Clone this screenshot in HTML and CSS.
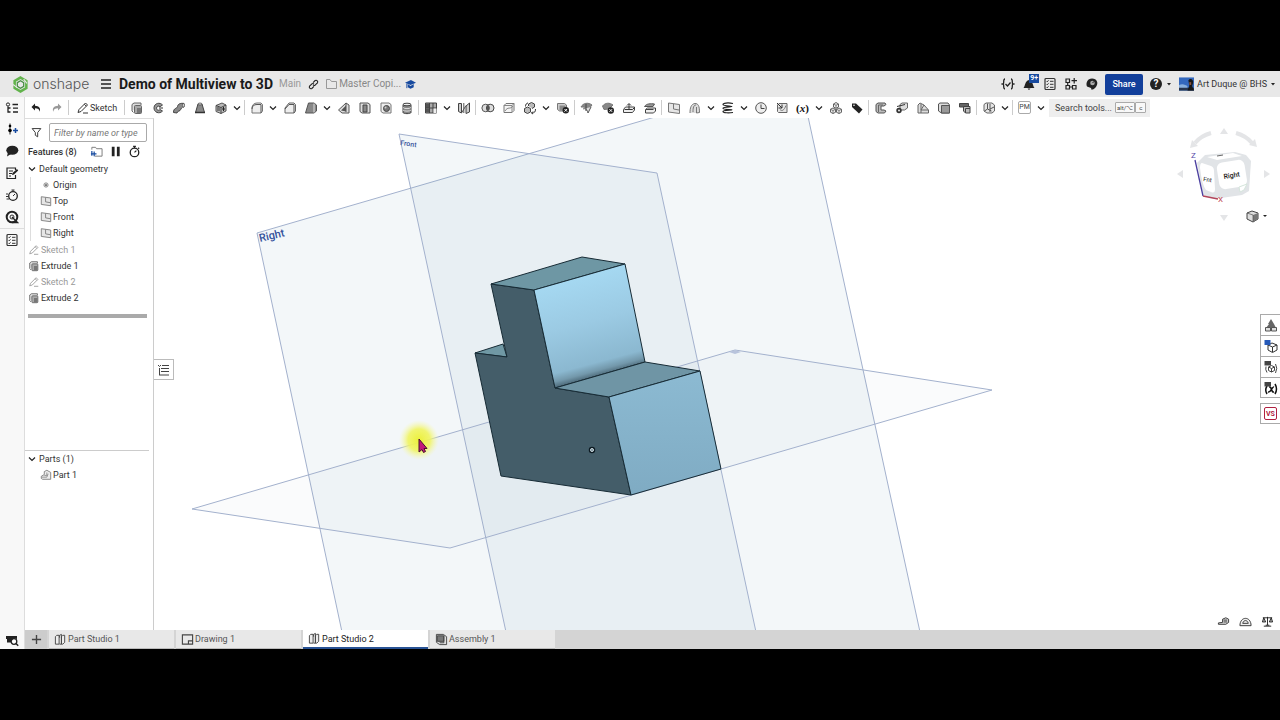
FILE: index.html
```html
<!DOCTYPE html>
<html lang="en">
<head>
<meta charset="utf-8">
<meta name="viewport" content="width=device-width, initial-scale=1">
<title>Demo of Multiview to 3D</title>
<link rel="stylesheet" href="styles.css">
</head>
<body>
<svg class="sprite" aria-hidden="true">
  <defs>
    <symbol id="i-chev" viewBox="0 0 8 8"><path d="M1 2.500 4 5.500 7 2.500" fill="none" stroke="#222" stroke-width="1.200"/></symbol>
    <symbol id="i-caret" viewBox="0 0 6 6"><path d="M1 2h4L3 4.500z" fill="#222"/></symbol>
    <symbol id="i-undo" viewBox="0 0 14 14"><path d="M6 2.500 2.500 6 6 9.500V7.300c3 0 4.200.7 4.700 3.400C12 7 10 4.800 6 4.700z" fill="#222"/></symbol>
    <symbol id="i-redo" viewBox="0 0 14 14"><path d="M8 2.500 11.500 6 8 9.500V7.300c-3 0-4.200.7-4.700 3.400C2 7 4 4.800 8 4.700z" fill="#999"/></symbol>
    <symbol id="i-pencil" viewBox="0 0 14 14"><path d="M2 11.500 3 8.500 9.500 2 11.500 4 5 10.500zM8.300 3.200l2 2M7 12h5" fill="none" stroke="currentColor"/></symbol>
    <symbol id="i-extrude" viewBox="0 0 14 14"><path d="M2 10V3.500L4 2h7v2M2 10l1.500 1.500" fill="#ddd" stroke="#666"/><rect x="4.500" y="4.500" width="7" height="8" rx="1" fill="#aaa" stroke="#666"/><path d="M7 7h4v5H7z" fill="#777"/></symbol>
    <symbol id="i-revolve" viewBox="0 0 14 14"><path d="M11.500 4C9 1 3.500 2 3 6.500c-.3 5 5.500 7 8.500 3.500L9 8.500c-1.500 1.500-3.500.5-3.400-1.500C5.700 5 7.700 4.500 9 5.700z" fill="#999" stroke="#444"/><path d="M8 7h4" stroke="#333"/></symbol>
    <symbol id="i-sweep" viewBox="0 0 14 14"><path d="M1.500 11.500C1.500 6.500 5 8 5.500 5.500 6 2.500 9 2 12 2.500V6C9 5.800 9.500 8 8 9.500 6.500 10.500 5.500 10 5 12z" fill="#8b8b8b" stroke="#444"/><ellipse cx="11.500" cy="4.200" rx="1" ry="1.800" fill="#ddd" stroke="#444" stroke-width=".6"/></symbol>
    <symbol id="i-loft" viewBox="0 0 14 14"><path d="M5 3h4l2.500 8.500h-9z" fill="#888" stroke="#444"/><ellipse cx="7" cy="3" rx="2" ry="1" fill="#ddd" stroke="#444" stroke-width=".7"/><path d="M2 11.500h10" stroke="#333" stroke-width="1.500"/></symbol>
    <symbol id="i-thicken" viewBox="0 0 14 14"><path d="M2 4.500 8 2l4 2v6l-5 2.500-5-2z" fill="#bbb" stroke="#555"/><path d="M2 4.500 7 6.500 12 4M7 6.500v6" fill="none" stroke="#444"/><path d="M3 6h3v4H3z" fill="#777"/><path d="M9.500 6v4M8 8h3" stroke="#222"/></symbol>
    <symbol id="i-fillet" viewBox="0 0 14 14"><path d="M2 12V7c0-3 2-5 5-5h4l1.500 1.500V10L11 12z" fill="#eee" stroke="#777"/><path d="M2 8c0-3 2-4.500 5-4.500h4V12" fill="none" stroke="#555"/></symbol>
    <symbol id="i-chamfer" viewBox="0 0 14 14"><path d="M2 12V7l4-5h5l1.500 1.500V10L11 12z" fill="#eee" stroke="#666"/><path d="M2 8l4-4.500h5V12" fill="none" stroke="#555"/></symbol>
    <symbol id="i-draft" viewBox="0 0 14 14"><path d="M1.500 12 4.500 2h5.500l2.500 2v6L10 12z" fill="#888" stroke="#555"/><path d="M10 2.500v9" stroke="#ddd"/></symbol>
    <symbol id="i-rib" viewBox="0 0 14 14"><path d="M1.500 9 9 2l3 2v8H5z" fill="#ddd" stroke="#555"/><path d="M4 9.500 9 4.500v6z" fill="#555"/><path d="M9 2v9" stroke="#555"/></symbol>
    <symbol id="i-shell" viewBox="0 0 14 14"><path d="M2 2h8l2 1.500V12H4L2 10.500z" fill="#ddd" stroke="#555"/><path d="M5 4h4v7H5z" fill="#888" stroke="#444"/></symbol>
    <symbol id="i-hole" viewBox="0 0 14 14"><path d="M2 2h8l2 1.500V12H4L2 10.500z" fill="#eee" stroke="#777"/><circle cx="7.500" cy="7.500" r="3" fill="#777" stroke="#444"/><circle cx="6.500" cy="6.500" r="1" fill="#ccc"/></symbol>
    <symbol id="i-thread" viewBox="0 0 14 14"><path d="M3 3.500v8c0 1.500 8 1.500 8 0v-8" fill="#888" stroke="#444"/><ellipse cx="7" cy="3.500" rx="4" ry="1.300" fill="#eee" stroke="#444"/><path d="M3 6.500c1 1.500 7 1.500 8 0M3 9c1 1.500 7 1.500 8 0" fill="none" stroke="#ddd"/></symbol>
    <symbol id="i-pattern" viewBox="0 0 14 14"><path d="M1.500 2h11v10h-11z" fill="#aaa" stroke="#444"/><path d="M2 2.500h3.500V7H2zM2 7.500h3.500v4H2z" fill="#555"/><path d="M5.500 2v10M9 2v10M2 7h10.500" stroke="#444"/><path d="M9.500 7.500h3V12h-3z" fill="#eee"/></symbol>
    <symbol id="i-mirror" viewBox="0 0 14 14"><path d="M1.500 2.500h3V12l-3-1.500zM9 5l3.500-3v9L9 12.500z" fill="#ccc" stroke="#444"/><path d="M4.500 12 9 4.500M6.800 2v10" stroke="#555"/></symbol>
    <symbol id="i-boolean" viewBox="0 0 14 14"><circle cx="4.700" cy="7" r="3.800" fill="#ddd" stroke="#555"/><circle cx="9.200" cy="7" r="3.800" fill="#bbb" fill-opacity=".5" stroke="#444"/><path d="M7 3.900a3.800 3.800 0 0 1 0 6.200 3.800 3.800 0 0 1 0-6.200" fill="#555"/></symbol>
    <symbol id="i-split" viewBox="0 0 14 14"><path d="M2 4.500 4 2.500h8v7l-2 2H2z" fill="#f5f5f5" stroke="#777"/><path d="M2 4.500h8v7M10 4.500l2-2M3 10c3-5 5-1 8-5" fill="none" stroke="#888"/></symbol>
    <symbol id="i-transform" viewBox="0 0 14 14"><path d="M1.500 7.500V11l3 1.500 3-1.500V7.500L4.500 6zM5.500 5V3l3-1.500 3 1.500V6l-2.500 1.500" fill="#bbb" stroke="#444"/><path d="M2.500 5.500c0-2 1-3.500 2.500-3.500M12.500 8c0 3-1 4-4 4M10 10.500 8.500 12l1.500 1" fill="none" stroke="#333"/></symbol>
    <symbol id="i-delete" viewBox="0 0 14 14"><path d="M1.500 2.500h7l2 1.500v6H3.500l-2-1.500z" fill="#ccc" stroke="#777"/><path d="M3.500 4.500h6v5h-6z" fill="#888"/><circle cx="9.800" cy="9.300" r="3.200" fill="#222"/><path d="m8.500 8 2.600 2.600m0-2.600-2.600 2.600" stroke="#fff"/></symbol>
    <symbol id="i-face1" viewBox="0 0 14 14"><path d="M1 6c2-4 7-5 11-2L8 9C6 6 4 6 1 6z" fill="#888" stroke="#777"/><path d="M3 8c2-1 4 0 5 4l3-6" fill="#ddd" stroke="#555"/><path d="M6 3v7" stroke="#444"/></symbol>
    <symbol id="i-face2" viewBox="0 0 14 14"><path d="M1.500 5c3-3.500 7-3.500 10.500-1L8 8 3 8.500z" fill="#888" stroke="#777"/><circle cx="9.800" cy="9.500" r="3.200" fill="#222"/><path d="m8.500 8.200 2.600 2.600m0-2.600-2.600 2.600" stroke="#fff"/></symbol>
    <symbol id="i-face3" viewBox="0 0 14 14"><path d="M1.500 8.500 3.500 6h9v3l-2 2.500h-9z" fill="#eee" stroke="#444"/><path d="M2.500 8.500h8l2-2M7 8V3M5 4.500 7 2.500 9 4.500" fill="none" stroke="#333"/></symbol>
    <symbol id="i-face4" viewBox="0 0 14 14"><path d="M2.500 8.500 4.500 7h8v3l-2 2h-8z" fill="#eee" stroke="#444"/><path d="M1.500 5.500c2-3 6-3 10-2.500L10 5.500z" fill="#999" stroke="#555"/><path d="M3 8.500h7.500" stroke="#444"/></symbol>
    <symbol id="i-plane" viewBox="0 0 14 14"><path d="M1.500 2 12.500 3.500v9L1.500 11z" fill="#e6e6e6" stroke="#777"/><path d="M6.500 3V8L12 9" fill="none" stroke="#777"/></symbol>
    <symbol id="i-surface" viewBox="0 0 14 14"><path d="M2 12c0-5 1-9 5-9.500 3 0 4.500 2 4.500 9L8.500 12" fill="#ddd" stroke="#777"/><path d="M5 11c0-4 .5-7 3-7M8.500 12V6" fill="none" stroke="#777"/></symbol>
    <symbol id="i-helix" viewBox="0 0 14 14"><path d="M12 2.500C7 1.500 2 2 2 3.500S11 5 11 5.500 2 5.500 2 7.200s9 1 9 1.600S2 9 2 10.500 8 12 12 11.500" fill="none" stroke="#222" stroke-width="1.200"/></symbol>
    <symbol id="i-clock" viewBox="0 0 14 14"><circle cx="7" cy="7" r="5.300" fill="#eee" stroke="#555"/><path d="M7 3.500V7.500h3.500" fill="none" stroke="#444"/></symbol>
    <symbol id="i-derived" viewBox="0 0 14 14"><path d="M2.500 4 4 2.500h8v9H3.500l-1-1z" fill="#e4e4e4" stroke="#666"/><path d="m2 2 5 5M7 3.500V7H3.500" fill="none" stroke="#333"/><path d="M5 8.500c2 2 4 1 6-4" fill="none" stroke="#777"/></symbol>
    <symbol id="i-mate" viewBox="0 0 14 14"><path d="M7 1.500 9.500 3v3L7 7.300 4.500 6V3zM4 7l2.500 1.300v3L4 12.500 1.500 11.200v-3zM10 7l2.500 1.300v3L10 12.500l-2.500-1.200v-3z" fill="#eee" stroke="#555" stroke-width=".9"/><path d="M4.500 3 7 4.300 9.500 3M7 4.300v3M1.500 8.300 4 9.500l2.500-1.200M4 9.500v3M7.500 8.300 10 9.500l2.500-1.200M10 9.500v3" fill="none" stroke="#555" stroke-width=".7"/></symbol>
    <symbol id="i-tag" viewBox="0 0 14 14"><path d="M2 2.500h4l6.500 6L9 12.500 2 6z" fill="#222"/><circle cx="4" cy="4.200" r=".8" fill="#fff"/></symbol>
    <symbol id="i-sm1" viewBox="0 0 14 14"><path d="M2 3.500 4 2h7l1 1.500L10 5H7v4h3l2 1-1.500 2H4l-2-1.500z" fill="#bbb" stroke="#555"/><path d="M4.500 11V4H9" fill="none" stroke="#666"/></symbol>
    <symbol id="i-sm2" viewBox="0 0 14 14"><path d="M5 3.500 7 2h5.500v5l-3 2H5z" fill="#ddd" stroke="#666"/><circle cx="4" cy="9.500" r="2.700" fill="#333"/><circle cx="4" cy="9.500" r="1" fill="#eee"/><path d="M2 5.500 10 3.500" stroke="#333"/></symbol>
    <symbol id="i-sm3" viewBox="0 0 14 14"><path d="M2 4 4 2l4 2 4.500 5v3H2z" fill="#ddd" stroke="#666"/><path d="M5 3v6h7M5 9 8 4M5 9v3" fill="none" stroke="#666"/></symbol>
    <symbol id="i-sm4" viewBox="0 0 14 14"><path d="M1.500 3 3 2h8l1.500 2v8H4.500L1.500 10z" fill="#ddd" stroke="#555"/><path d="M4.500 4.500h8V12h-8z" fill="#999" stroke="#555"/></symbol>
    <symbol id="i-sm5" viewBox="0 0 14 14"><path d="M1.500 2.500h9V6h-9z" fill="#666" stroke="#444"/><path d="M5.500 5.500H12v6.500H7.500l-2-2z" fill="#bbb" stroke="#444"/><path d="M7.500 7.500H12M7.500 7.500V12" stroke="#444"/></symbol>
    <symbol id="i-frame" viewBox="0 0 14 14"><path d="M2 3.500 4 2h6l2.500 2v6L10 12H5L2 10z" fill="#e6e6e6" stroke="#666"/><path d="M5.500 2.500V8l4 2M5.500 8 2.500 10M8 3v5l4-2M8 8v3" fill="none" stroke="#555"/></symbol>
    <symbol id="i-tree" viewBox="0 0 14 14"><circle cx="3" cy="3.500" r="1.600" fill="none" stroke="#222"/><path d="M3 5.500V11h2.500M3 7h2.500M7.500 3.500H13M8 7.200h5M8 11h5" fill="none" stroke="#222" stroke-width="1.300"/></symbol>
    <symbol id="i-insert" viewBox="0 0 14 14"><path d="M5 1.500v11" stroke="#222"/><circle cx="5" cy="4" r="1.300"/><circle cx="5" cy="8.500" r="1.800"/><path d="M8 8.500h5M10.500 6v5" stroke="#174a9f" stroke-width="1.500"/></symbol>
    <symbol id="i-chat" viewBox="0 0 14 14"><ellipse cx="7.300" cy="6.300" rx="6" ry="4.500" fill="#222"/><path d="m3 8-1 4.500 4-2.500" fill="#222"/></symbol>
    <symbol id="i-note" viewBox="0 0 14 14"><path d="M10.500 4V2H2v10.500h8.500V9M4 5h4M4 7.500h3M4 10h2" fill="none" stroke="#222" stroke-width="1.200"/><path d="m7 9 .5-2L12 3l1.200 1.500L9 8.500z" fill="#222"/></symbol>
    <symbol id="i-timer" viewBox="0 0 14 14"><circle cx="7" cy="8" r="4.600" fill="none" stroke="#222" stroke-width="1.400"/><path d="M5.500 1.500h3M7 1.500v2M7 8l2-2M11 3l1 1" stroke="#222" stroke-width="1.300"/></symbol>
    <symbol id="i-history" viewBox="0 0 14 14"><circle cx="8" cy="8" r="4.300" fill="none" stroke="#222" stroke-width="1.300"/><path d="M6.500 2h3M8 2v2M8 8l2-2M1 6h2M1 8.500h3M1.500 11h2.500" stroke="#333"/></symbol>
    <symbol id="i-gauge" viewBox="0 0 14 14"><circle cx="7" cy="7" r="5.300" fill="none" stroke="#222" stroke-width="2"/><circle cx="7" cy="7" r="2" fill="none" stroke="#333"/><path d="m7 7 5.500 5.500H7" stroke="#222" fill="none" stroke-width="1.400"/></symbol>
    <symbol id="i-list" viewBox="0 0 14 14"><rect x="2" y="1.500" width="10" height="11" rx="1" fill="none" stroke="#333" stroke-width="1.200"/><path d="m3.500 4 .8.8 1.200-1.500M3.500 7l.8.8 1.200-1.500M3.500 10l.8.8 1.200-1.500M7 4.300h3.500M7 7.300h3.500M7 10.300h3.500" fill="none" stroke="#333"/></symbol>
    <symbol id="i-tabsearch" viewBox="0 0 14 14"><path d="M1 3h11v3a4 4 0 0 0-6 3.500H2V6H1z" fill="#222"/><circle cx="9" cy="8.500" r="2.800" fill="#fff" stroke="#222" stroke-width="1.300"/><path d="m11 10.500 2.200 2.200" stroke="#222" stroke-width="1.500"/></symbol>
    <symbol id="i-studio" viewBox="0 0 14 14"><path d="M1.500 4 3 2.500h2.500V12h-4zM6 5V2.500L8 1.500V12H6M8 4l1.500-1.500h2V10L9.500 12H8z" fill="#eee" stroke="#444"/></symbol>
    <symbol id="i-drawing" viewBox="0 0 14 14"><path d="M1.500 2h11v10h-11zM8 12V8.500h4.500" fill="none" stroke="#444" stroke-width="1.200"/></symbol>
    <symbol id="i-assembly" viewBox="0 0 14 14"><path d="M1.500 1.500H9L12.500 4v8.500H5L1.500 10z" fill="#ddd" stroke="#444"/><path d="M2.500 3h7v6h-7z" fill="#777" stroke="#444"/><path d="M9.500 3v7.500H5" fill="none" stroke="#444"/></symbol>
    <symbol id="i-part" viewBox="0 0 14 14"><path d="M1.500 8.500 5 6.500V3l3-1.500L12.500 4v8H3l-1.500-1z" fill="#eee" stroke="#777"/><path d="M5 7.500h3V4M2 9.500h6l1.500-4" fill="none" stroke="#888"/></symbol>
  </defs>
</svg>

<div class="app">
  <header class="header">
    <svg class="logo" viewBox="0 0 16 16" aria-hidden="true"><path d="M8 1.500 13.500 4.700v6.600L8 14.500 2.500 11.300V4.700z" fill="none" stroke="#62b34c" stroke-width="2.400"/><path d="M8 4.500 11 6.200v3.600L8 11.500 5 9.800V6.200z" fill="#e8e8e8" stroke="#4a8f45" stroke-width="1.200"/><path d="m1 8 4 3M11 3l3 4" stroke="#e8e8e8"/></svg>
    <span class="brand">onshape</span>
    <button class="plain menu" aria-label="Menu"><svg viewBox="0 0 12 12"><path d="M1 2h10M1 6h10M1 10h10" stroke="#222" stroke-width="1.700"/></svg></button>
    <h1 class="title">Demo of Multiview to 3D</h1>
    <span class="branch">Main</span>
    <button class="plain link" aria-label="Copy link"><svg viewBox="0 0 12 12"><path d="M5.500 4 7.800 1.700c1.800-1 3.500.8 2.500 2.500L8 6.500c-1 .8-2 .5-2.500 0M6.500 8 4.200 10.300c-1.800 1-3.500-.8-2.500-2.500L4 5.500c1-.8 2-.5 2.500 0" fill="none" stroke="#222" stroke-width="1.200"/></svg></button>
    <a class="folder" href="#"><svg viewBox="0 0 12 12"><path d="M1 10.500v-9h3.500l1.500 2h5v7z" fill="none" stroke="#999"/></svg>Master Copi...</a>
    <svg class="edu" viewBox="0 0 12 12" aria-hidden="true"><path d="M0 4 6.500 1 12 4 6 6.500z" fill="#174a9f"/><path d="M3 5.500v3.500l3 1.500 3.500-1.500v-3.500L6 7.500z" fill="#174a9f"/><path d="M2 5v5" stroke="#174a9f"/></svg>
    <nav class="account">
      <button class="plain hi" aria-label="Feature script"><svg viewBox="0 0 14 14"><path d="M4 2C2 2 3 5.500 2.500 6.500L1 7l1.500.5C3 8.500 2 12 4 12M10 2c2 0 1 3.500 1.500 4.500L13 7l-1.500.5C11 8.500 12 12 10 12M4.500 7l2 2 3-3.500" fill="none" stroke="#222" stroke-width="1.300"/></svg></button>
      <button class="plain hi bell" aria-label="Notifications"><svg viewBox="0 0 14 14"><path d="M1.500 11c2-2 1-7 5.500-8 4.500 1 3.500 6 5.500 8zM5.500 11.500h3L7 13z" fill="#222"/></svg><span class="badge">9+</span></button>
      <button class="plain hi" aria-label="Tasks"><svg viewBox="0 0 14 14"><use href="#i-list"/></svg></button>
      <button class="plain hi" aria-label="Apps"><svg viewBox="0 0 14 14"><path d="M2 2h3.500v3.500H2zM2 8.500h3.500V12H2zM8.500 8.500H12V12H8.500zM10.200 1v5.500M7.500 3.700H13M5.500 10h3M3.700 5.500v3" fill="none" stroke="#222" stroke-width="1.200"/></svg></button>
      <button class="plain hi" aria-label="Learning"><svg viewBox="0 0 14 14"><path d="M7 1.500c5 0 6.500 4.500 4.500 7.500-1 1.500-2 3.500-5 3.700L6 11 2 9.500C.5 6 2.500 1.500 7 1.500z" fill="#222"/><circle cx="7.500" cy="6" r="2.300" fill="#aaa"/><path d="m7.500 6 2-2" stroke="#222"/></svg></button>
      <button class="share">Share</button>
      <button class="plain help" aria-label="Help"><span class="q">?</span><svg class="caret" viewBox="0 0 6 6"><use href="#i-caret"/></svg></button>
      <button class="plain user"><svg class="avatar" viewBox="0 0 16 14" aria-hidden="true"><path d="M0 0h16v14H0z" fill="#3468bd"/><path d="M0 8c4-2 7 0 9 1v5H0z" fill="#8ab0dd"/><path d="M0 11h16v3H0z" fill="#27354d"/><path d="M10 3c2-3 6-1 5 3l-1 3 2 5H9l2-5z" fill="#171717"/><path d="M11 5h2v3h-2z" fill="#8a533d"/></svg>Art Duque @ BHS<svg class="caret" viewBox="0 0 6 6"><use href="#i-caret"/></svg></button>
    </nav>
  </header>

  <div class="body">
    <nav class="rail" aria-label="Panels">
      <button class="plain first" aria-label="Feature list"><svg><use href="#i-tree"/></svg></button>
      <button class="plain" aria-label="Insert"><svg><use href="#i-insert"/></svg></button>
      <button class="plain" aria-label="Comments"><svg><use href="#i-chat"/></svg></button>
      <button class="plain" aria-label="Notes"><svg><use href="#i-note"/></svg></button>
      <button class="plain" aria-label="History"><svg><use href="#i-history"/></svg></button>
      <button class="plain" aria-label="Simulation"><svg><use href="#i-gauge"/></svg></button>
      <button class="plain ruled" aria-label="Checklist"><svg><use href="#i-list"/></svg></button>
      <button class="plain last" aria-label="Search tabs"><svg><use href="#i-tabsearch"/></svg></button>
    </nav>

    <div class="document">
      <div class="toolbar" role="toolbar" aria-label="Tools">
        <button class="tool" aria-label="Undo"><svg><use href="#i-undo"/></svg></button>
        <button class="tool" aria-label="Redo"><svg><use href="#i-redo"/></svg></button>
        <i class="sep"></i>
        <button class="sketch"><svg><use href="#i-pencil"/></svg>Sketch</button>
        <i class="sep"></i>
        <button class="tool" aria-label="Extrude"><svg><use href="#i-extrude"/></svg></button>
        <button class="tool" aria-label="Revolve"><svg><use href="#i-revolve"/></svg></button>
        <button class="tool" aria-label="Sweep"><svg><use href="#i-sweep"/></svg></button>
        <button class="tool" aria-label="Loft"><svg><use href="#i-loft"/></svg></button>
        <button class="tool" aria-label="Thicken"><svg><use href="#i-thicken"/></svg></button>
        <button class="more" aria-label="More solids"><svg><use href="#i-chev"/></svg></button>
        <i class="sep"></i>
        <button class="tool" aria-label="Fillet"><svg><use href="#i-fillet"/></svg></button>
        <button class="more" aria-label="More fillets"><svg><use href="#i-chev"/></svg></button>
        <button class="tool" aria-label="Chamfer"><svg><use href="#i-chamfer"/></svg></button>
        <button class="tool" aria-label="Draft"><svg><use href="#i-draft"/></svg></button>
        <button class="more" aria-label="More drafts"><svg><use href="#i-chev"/></svg></button>
        <button class="tool" aria-label="Rib"><svg><use href="#i-rib"/></svg></button>
        <button class="tool" aria-label="Shell"><svg><use href="#i-shell"/></svg></button>
        <button class="tool" aria-label="Hole"><svg><use href="#i-hole"/></svg></button>
        <button class="tool" aria-label="Thread"><svg><use href="#i-thread"/></svg></button>
        <i class="sep"></i>
        <button class="tool" aria-label="Pattern"><svg><use href="#i-pattern"/></svg></button>
        <button class="more" aria-label="More patterns"><svg><use href="#i-chev"/></svg></button>
        <button class="tool" aria-label="Mirror"><svg><use href="#i-mirror"/></svg></button>
        <i class="sep"></i>
        <button class="tool" aria-label="Boolean"><svg><use href="#i-boolean"/></svg></button>
        <button class="tool" aria-label="Split"><svg><use href="#i-split"/></svg></button>
        <button class="tool" aria-label="Transform"><svg><use href="#i-transform"/></svg></button>
        <button class="more" aria-label="More transforms"><svg><use href="#i-chev"/></svg></button>
        <button class="tool" aria-label="Delete part"><svg><use href="#i-delete"/></svg></button>
        <i class="sep"></i>
        <button class="tool" aria-label="Modify fillet"><svg><use href="#i-face1"/></svg></button>
        <button class="tool" aria-label="Delete face"><svg><use href="#i-face2"/></svg></button>
        <button class="tool" aria-label="Move face"><svg><use href="#i-face3"/></svg></button>
        <button class="tool" aria-label="Replace face"><svg><use href="#i-face4"/></svg></button>
        <i class="sep"></i>
        <button class="tool" aria-label="Plane"><svg><use href="#i-plane"/></svg></button>
        <button class="tool" aria-label="Surface"><svg><use href="#i-surface"/></svg></button>
        <button class="more" aria-label="More surfaces"><svg><use href="#i-chev"/></svg></button>
        <button class="tool" aria-label="Helix"><svg><use href="#i-helix"/></svg></button>
        <button class="more" aria-label="More curves"><svg><use href="#i-chev"/></svg></button>
        <button class="tool" aria-label="Composite"><svg><use href="#i-clock"/></svg></button>
        <button class="tool" aria-label="Derived"><svg><use href="#i-derived"/></svg></button>
        <button class="tool var" aria-label="Variable">(<em>x</em>)</button>
        <button class="more" aria-label="More variables"><svg><use href="#i-chev"/></svg></button>
        <button class="tool" aria-label="Mate connector"><svg><use href="#i-mate"/></svg></button>
        <button class="tool" aria-label="Tag"><svg><use href="#i-tag"/></svg></button>
        <i class="sep"></i>
        <button class="tool" aria-label="Sheet metal"><svg><use href="#i-sm1"/></svg></button>
        <button class="tool" aria-label="Flange"><svg><use href="#i-sm2"/></svg></button>
        <button class="tool" aria-label="Corner"><svg><use href="#i-sm3"/></svg></button>
        <button class="tool" aria-label="Bend"><svg><use href="#i-sm4"/></svg></button>
        <button class="tool" aria-label="Tab"><svg><use href="#i-sm5"/></svg></button>
        <i class="sep"></i>
        <button class="tool" aria-label="Frame"><svg><use href="#i-frame"/></svg></button>
        <button class="more" aria-label="More frames"><svg><use href="#i-chev"/></svg></button>
        <i class="sep"></i>
        <button class="tool"><span class="pm">PM</span></button>
        <button class="more" aria-label="More custom features"><svg><use href="#i-chev"/></svg></button>
        <button class="search">Search tools...<kbd>alt/⌥</kbd><kbd>c</kbd></button>
      </div>

      <main class="workspace">
        <aside class="panel">
          <div class="features">
            <div class="filter">
              <svg class="funnel" viewBox="0 0 14 14" aria-hidden="true"><path d="M1.500 2h11L8.500 7v5.500L5.500 10.500V7z" fill="none" stroke="#333" stroke-width="1.200"/></svg>
              <input type="text" placeholder="Filter by name or type" aria-label="Filter by name or type">
            </div>
            <div class="heading">
              <h2>Features (8)</h2>
              <button class="plain" aria-label="Add folder"><svg viewBox="0 0 14 14"><path d="M2 5V2.500h4l1 1.500h6v8H5" fill="none" stroke="#777"/><path d="M2 6.500v5M1 9.500h6M4.500 7v5" stroke="#174a9f" stroke-width="1.300"/></svg></button>
              <button class="plain" aria-label="Suspend"><svg viewBox="0 0 14 14"><path d="M3 2h3v10H3zM8.500 2h3v10h-3z" fill="#222"/></svg></button>
              <button class="plain" aria-label="Regeneration times"><svg><use href="#i-timer"/></svg></button>
            </div>
            <ul class="tree">
              <li class="row group"><svg class="fold"><use href="#i-chev"/></svg>Default geometry</li>
              <li>
                <ul class="nested">
                  <li class="row"><svg viewBox="0 0 14 14"><circle cx="7" cy="7" r="2.500" fill="#ddd" stroke="#888"/><circle cx="7" cy="7" r="1" fill="#333"/></svg>Origin</li>
                  <li class="row"><svg><use href="#i-plane"/></svg>Top</li>
                  <li class="row"><svg><use href="#i-plane"/></svg>Front</li>
                  <li class="row"><svg><use href="#i-plane"/></svg>Right</li>
                </ul>
              </li>
              <li class="row muted"><svg><use href="#i-pencil"/></svg>Sketch 1</li>
              <li class="row"><svg><use href="#i-extrude"/></svg>Extrude 1</li>
              <li class="row muted"><svg><use href="#i-pencil"/></svg>Sketch 2</li>
              <li class="row"><svg><use href="#i-extrude"/></svg>Extrude 2</li>
            </ul>
            <div class="rollback"></div>
          </div>
          <ul class="tree parts">
            <li class="row group"><svg class="fold"><use href="#i-chev"/></svg>Parts (1)</li>
            <li><ul class="items"><li class="row"><svg><use href="#i-part"/></svg>Part 1</li></ul></li>
          </ul>
        </aside>

        <section class="viewport" aria-label="Model view">
          <svg class="scene" viewBox="154 118 1126 512" preserveAspectRatio="xMinYMin slice">
            <defs>
              <linearGradient id="upper" gradientUnits="userSpaceOnUse" x1="574" y1="279" x2="600" y2="376">
                <stop offset="0" stop-color="#a5d8f1"/><stop offset=".45" stop-color="#9bcae3"/><stop offset=".86" stop-color="#8bb8d0"/><stop offset=".94" stop-color="#7398ab"/><stop offset="1" stop-color="#4a6675"/>
              </linearGradient>
              <linearGradient id="lower" x1="0" y1="0" x2="0" y2="1"><stop offset="0" stop-color="#8cbad2"/><stop offset="1" stop-color="#7fabc3"/></linearGradient>
              <radialGradient id="halo"><stop offset="0" stop-color="#ecf03a"/><stop offset=".55" stop-color="#f0f460" stop-opacity=".9"/><stop offset="1" stop-color="#f6f8b0" stop-opacity="0"/></radialGradient>
            </defs>
            <g class="planes">
              <path d="M257 233 799 75 920 632H342z"/>
              <path d="M399 134 657 173 756 632H506z"/>
              <path class="ground" d="M192 509 735 350 992 390 450 548z"/>
            </g>
            <path d="M729 352l6-2 6 2-6 2z" fill="#b8c3dc"/>
            <text class="plane-name" transform="translate(260 242) rotate(-13)" font-size="11">Right</text>
            <text class="plane-name" transform="translate(400 145) rotate(8)" font-size="7">Front</text>
            <g class="solid">
              <path d="M475 353 503 344 507 357z" fill="#7098a4"/>
              <path d="M491 284 534 290 555 388 609 397 631 495 501 476 475 353 507 357z" fill="#445d69"/>
              <path d="M491 284 582 257 625 264 534 290z" fill="#6e97a4"/>
              <path d="M534 290 625 264 645 362 555 388z" fill="url(#upper)"/>
              <path d="M555 388 645 362 700 371 609 397z" fill="#6f95a5"/>
              <path d="M609 397 700 371 721 469 631 495z" fill="url(#lower)"/>
            </g>
            <circle cx="592" cy="450" r="2.500" fill="#6f8894" stroke="#0c1a22" stroke-width="1.500"/><circle cx="592" cy="450" r="1.500" fill="none" stroke="#e8f1f5" stroke-width=".8"/>
            <circle cx="419" cy="440" r="20" fill="url(#halo)"/>
            <path d="M419 439v13l3-2.500 1.500 3 2-1-1.500-3h3z" fill="#c2187a" stroke="#4b1030"/>
          </svg>

          <button class="toggle" aria-label="Toggle feature list"><svg viewBox="0 0 14 14"><path d="M2 2l1.500 1.500L5 2M6 2.500h7M3.500 5v7.500M5 5.500h8M5 8.500h8M4 12h9" fill="none" stroke="#444"/></svg></button>

          <svg class="cube" viewBox="1160 118 120 112" role="img" aria-label="View cube">
            <g fill="#e4e5e7"><path d="m1224 128 4 6h-8zM1224 221l4-6h-8zM1177 174l6-4v8zM1270 174l-6-4v8zM1190 148l2-8 6 6zM1257 147l-2-8-6 6z"/></g>
            <path d="M1195 143c4-5 9-8 16-10M1236 133c7 2 12 5 16 10" fill="none" stroke="#e4e5e7" stroke-width="4"/>
            <path d="M1197 163 1205 155 1235 152 1246 155 1251 161 1249 191 1242 195 1214 199 1203 195z" fill="#e1e4e7"/>
            <path d="M1207 157 1233 153 1242 156 1217 160z" fill="#fff"/>
            <rect x="1218" y="161" width="28" height="27" rx="6" fill="#fff" transform="rotate(-9 1232 175)"/>
            <path d="M1202 163 1211 166q3 1 3 5l1 18q0 5-4 3l-5-2q-4-5-6-22 0-5 2-5z" fill="#fff"/>
            <path d="M1217 156l6-1" stroke="#666"/><path d="m1239 187 8-3-3 6-4 2z" fill="#fff" stroke="#d5e5dc"/>
            <path d="m1195 160 8 36" stroke="#4b3fa0" stroke-width="1.300"/><path d="m1203 196 15 3" stroke="#b3455a" stroke-width="1.300"/>
            <text x="1191" y="158" font-size="8" fill="#5548a8">Z</text><text x="1218" y="202" font-size="8" fill="#c04052">X</text>
            <text transform="translate(1224 179) rotate(-9)" font-size="7" font-weight="500" fill="#222">Right</text>
            <text transform="translate(1203 181) rotate(8)" font-size="6" fill="#222">Fnt</text>
            <path d="m1247 213 5-2 6 2v6l-5 3-6-3z" fill="#ddd" stroke="#444"/><path d="m1253 215 5-2v6l-5 3z" fill="#777"/><path d="m1247 213 6 2v7" fill="none" stroke="#555" stroke-width=".7"/><path d="M1263 215h4l-2 2z" fill="#222"/>
          </svg>

          <div class="side">
            <button aria-label="Appearance"><svg viewBox="0 0 14 14"><path d="m7 1 3 5H4zM5 6h5l2 4H2z" fill="#666"/><path d="M1.500 9.500h5V13h-5zM7.500 9.500H12.500V13h-5z" fill="#ddd" stroke="#555"/></svg></button>
            <button aria-label="Configurations"><svg viewBox="0 0 14 14"><path d="m4 6 4-2 5 2v5l-4.500 2.500L4 11zM4 6l4.500 2L13 6M8.500 8v5" fill="#fff" stroke="#333"/><path d="M.5 1h6v5h-6z" fill="#2659b8"/></svg></button>
            <button aria-label="Configured properties"><svg viewBox="0 0 14 14"><path d="m4.500 7 3-1.500 3 1.500v3.500l-3 1.500-3-1.500zM7.500 8.500V12M4.500 7l3 1.500 3-1.500M2 6.500q-1 3 1 6M11.500 4q2.500 4 0 9" fill="none" stroke="#444"/><path d="M.5 1h6.500v4.500H.5z" fill="#444"/></svg></button>
            <button class="boxed" aria-label="Variable table"><svg viewBox="0 0 14 14"><path d="M3 5q-2.500 4 0 8M11 3q3 5 0 10M5 6c3-1 2 6 5 5M10 6c-2-1-3 6-6 5" fill="none" stroke="#111" stroke-width="1.500"/><path d="M.5 1h6.500v4.500H.5z" fill="#444"/></svg></button>
            <button class="boxed apart" aria-label="Version app"><span class="vs">VS</span></button>
          </div>

          <div class="measure">
            <button class="plain" aria-label="Tape measure"><svg viewBox="0 0 14 14"><path d="M1.500 10h8l3-2V4.500L9.500 3 6 4.500V8l-4.500.5z" fill="#ddd" stroke="#333"/><path d="M7 5.500h4M7 7.500h4" stroke="#333"/></svg></button>
            <button class="plain" aria-label="Protractor"><svg viewBox="0 0 14 14"><path d="M1 11.500C1 1 13 1 13 11.500zM4 9c1-4 5-4 6 0z" fill="#eee" stroke="#333"/></svg></button>
            <button class="plain" aria-label="Mass properties"><svg viewBox="0 0 14 14"><path d="M2 3h10M7 2v9M3 12h8M5 11h4M3 3 1.500 7.500h3.500zM11 3 9 7.500h3.500z" fill="#bbb" stroke="#222"/></svg></button>
          </div>
        </section>
      </main>

      <footer class="tabs" role="tablist">
        <button class="add" aria-label="Add tab"><svg viewBox="0 0 12 12"><path d="M6 1v10M1 6h10" stroke="#444" stroke-width="1.500"/></svg></button>
        <button class="tab" role="tab"><svg><use href="#i-studio"/></svg>Part Studio 1</button>
        <button class="tab" role="tab"><svg><use href="#i-drawing"/></svg>Drawing 1</button>
        <button class="tab active" role="tab" aria-selected="true"><svg><use href="#i-studio"/></svg>Part Studio 2</button>
        <button class="tab" role="tab"><svg><use href="#i-assembly"/></svg>Assembly 1</button>
      </footer>
    </div>
  </div>
</div>
</body>
</html>
```
FILE: styles.css
```css
* { box-sizing: border-box; }

body {
  margin: 0;
  padding: 71px 0;
  min-height: 100vh;
  background: #000;
  color: #333;
  font: 9px/16px Roboto, "Liberation Sans", sans-serif;
  display: flex;
  flex-direction: column;
}

button, input { font: inherit; color: inherit; }
button { padding: 0; margin: 0; border: 0; background: none; display: flex; align-items: center; justify-content: center; flex: none; }
ul { list-style: none; margin: 0; padding: 0; }
svg { display: block; flex: none; }
.sprite { position: absolute; width: 0; height: 0; }

.app { flex: 1; display: flex; flex-direction: column; min-height: 0; background: #fff; }

.header { display: flex; align-items: center; height: 26px; padding: 0 4px 0 12px; background: #e8e8e8; }
.logo { width: 17px; height: 17px; }
.brand { margin-left: 4px; width: 56px; font: 300 14px/20px Inter, sans-serif; color: #555; }
.menu { margin-left: 11px; }
.menu svg { width: 12px; height: 12px; }
.title { margin: 0 0 0 7px; font-size: 14px; line-height: 20px; font-weight: 700; color: #1a1a1a; white-space: nowrap; }
.branch { margin-left: 6px; font-size: 10px; color: #999; }
.link { margin-left: 7px; }
.link svg, .edu { width: 11px; height: 11px; }
.folder { margin-left: 6px; display: flex; align-items: center; gap: 1px; font-size: 10px; color: #888; text-decoration: none; white-space: nowrap; }
.folder svg { width: 13px; height: 12px; }
.edu { margin-left: 4px; }

.account { margin-left: auto; display: flex; align-items: center; }
.hi { width: 21px; height: 22px; }
.hi svg { width: 14px; height: 14px; }
.bell { position: relative; }
.badge { position: absolute; top: 1px; right: 0; width: 10px; height: 9px; background: #174a9f; color: #fff; font-size: 7px; line-height: 9px; font-weight: 700; }
.share { width: 38px; height: 21px; margin-left: 3px; border-radius: 2px; background: #123f9b; color: #fff; font-size: 9px; font-weight: 500; }
.help { margin-left: 7px; gap: 4px; }
.q { width: 12px; height: 12px; border-radius: 50%; background: #222; color: #fff; font-size: 10px; line-height: 12px; font-weight: 700; }
.caret { width: 6px; height: 6px; }
.user { margin-left: 7px; gap: 3px; white-space: nowrap; }
.avatar { width: 15px; height: 14px; }

.body { flex: 1; display: flex; min-height: 0; }
.rail { width: 25px; display: flex; flex-direction: column; background: #f8f8f8; border-right: 1px solid #ddd; }
.rail .plain { height: 22px; }
.rail svg { width: 14px; height: 14px; }
.rail .first { height: 21px; }
.rail .ruled { border-top: 1px solid #ddd; }
.rail .last { margin-top: auto; height: 18px; }
.document { flex: 1; min-width: 0; display: flex; flex-direction: column; }

.toolbar { height: 21px; display: flex; align-items: center; overflow: hidden; }
.tool { width: 21px; height: 20px; }
.tool svg, .sketch svg { width: 14px; height: 14px; }
.more { width: 12px; height: 20px; }
.more svg { width: 8px; height: 8px; }
.sep { flex: none; width: 1px; height: 15px; margin: 0 1px; background: #ccc; }
.sketch { width: 53px; }
.var { font: 700 11px/12px "Liberation Serif", serif; color: #111; }
.pm { border: 1px solid #aaa; border-radius: 2px; width: 13px; height: 13px; font-size: 7px; line-height: 11px; color: #444; }
.search { height: 18px; margin-left: 2px; padding: 0 4px 0 6px; background: #eee; color: #444; white-space: nowrap; }
.search kbd { height: 11px; padding: 0 1px; border: 1px solid #aaa; border-radius: 1px; background: #f8f8f8; font: 6px/9px Roboto, sans-serif; }
.search kbd:first-child { margin-left: 3px; }
.search kbd:last-child { padding: 0 3px; }

.workspace { flex: 1; display: flex; min-height: 0; }
.panel { width: 129px; display: flex; flex-direction: column; border-right: 1px solid #ccc; border-top: 1px solid #ddd; }
.features { height: 331px; padding: 4px 6px 0 3px; }
.filter { display: flex; align-items: center; gap: 7px; padding-left: 3px; }
.funnel { width: 11px; height: 13px; }
.filter input { flex: 1; min-width: 0; height: 19px; padding: 0 4px; border: 1px solid #aaa; border-radius: 2px; background: #fff; font-style: italic; }
.filter input::placeholder { color: #777; font-style: italic; opacity: 1; }
.heading { display: flex; align-items: center; height: 19px; }
.heading h2 { margin: 0; width: 59px; font-size: 9px; line-height: 16px; font-weight: 500; }
.heading button { width: 19px; }
.heading svg { width: 13px; height: 13px; }
.row { display: flex; align-items: center; height: 16px; gap: 1px; white-space: nowrap; }
.row svg { width: 12px; height: 12px; }
.row .fold { width: 8px; height: 8px; }
.group { gap: 3px; }
.nested { margin-left: 2px; padding-left: 9px; border-left: 1px solid #ddd; margin-bottom: 1px; }
.items { padding-left: 12px; }
.muted { color: #999; }
.rollback { height: 4px; margin-top: 8px; background: #aaa; }
.parts { flex: 1; margin-right: 4px; border-top: 1px solid #ccc; padding-left: 3px; }

.viewport { flex: 1; min-width: 0; position: relative; overflow: hidden; background: #fff; }
.scene { position: absolute; width: 100%; height: 100%; }
.planes path { fill: #75a0b4; fill-opacity: .085; stroke: #a3b1cd; stroke-width: 1; }
.planes .ground { fill-opacity: .04; }
.plane-name { fill: #34519b; font-weight: 500; }
.solid path { stroke: #172b35; stroke-width: 1; stroke-linejoin: round; }
.toggle { position: absolute; left: -1px; top: 241px; width: 21px; height: 21px; background: #fff; border: 1px solid #bbb; border-left: 0; }
.toggle svg { width: 14px; height: 14px; }
.cube { position: absolute; top: 0; right: 0; width: 120px; height: 112px; }
.side { position: absolute; right: 0; top: 196px; width: 20px; }
.side button { width: 20px; height: 21px; border: 1px solid #aaa; border-bottom-width: 0; border-right: 0; background: #fff; }
.side svg { width: 14px; height: 14px; }
.side .boxed { border-bottom-width: 1px; }
.side .apart { margin-top: 5px; }
.vs { width: 13px; height: 13px; border: 1px solid #b02040; border-radius: 2px; color: #b02040; font-size: 7px; line-height: 13px; font-weight: 700; }
.measure { position: absolute; right: 6px; bottom: 2px; display: flex; gap: 9px; }
.measure svg { width: 13px; height: 13px; }

.tabs { display: flex; height: 19px; background: #d4d4d4; gap: 2px; }
.add { width: 22px; background: #ccc; }
.add svg { width: 11px; height: 11px; }
.tab { width: 125px; justify-content: flex-start; gap: 1px; padding-left: 5px; background: #e8e8e8; border-bottom: 1px solid #bbb; color: #555; }
.tab svg { width: 13px; height: 13px; }
.tab.active { background: #fff; border-bottom: 2px solid #285294; color: #222; }
```
